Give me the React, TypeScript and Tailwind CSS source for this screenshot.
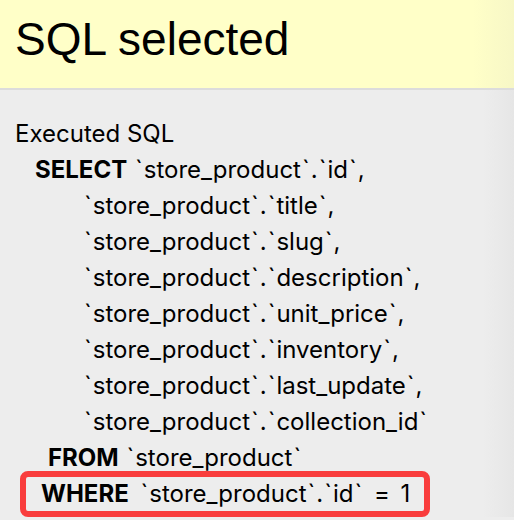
import React from 'react';

const columns = ['title', 'slug', 'description', 'unit_price', 'inventory', 'last_update'];

// backtick glyph with the wider side bearings seen in the reference font
const Tick = () => <span className="mx-[1px]">`</span>;

const Col = ({ name }: { name: string }) => (
  <>
    <Tick />store_product<Tick />.<Tick />{name}<Tick />
  </>
);

export default function App() {
  return (
    <div className="min-h-screen w-[514px] h-[520px] overflow-hidden bg-[#ededed] text-black font-['Liberation_Sans',Arial,sans-serif]">
      {/* Header */}
      <header className="h-[90px] bg-[linear-gradient(to_right,#ffffc8_92%,#f7f7c6)] border-b-2 border-[#dcdcdc] flex items-center pl-[15px] pb-[10px]">
        <h1 className="text-[46px] leading-[52px] font-normal">SQL selected</h1>
      </header>

      {/* Executed SQL */}
      <div className="pt-[26px] text-[24px] leading-[36px] font-['Inter',sans-serif] bg-[linear-gradient(to_right,#ededed_94%,#e6e6e6)]">
        <div className="pl-[15px]">Executed SQL</div>
        <div className="pl-[35px] whitespace-pre">
          <span className="font-bold">SELECT</span> <Col name="id" />,
        </div>
        {columns.map((c) => (
          <div key={c} className="pl-[83px] whitespace-pre">
            <Col name={c} />,
          </div>
        ))}
        <div className="pl-[83px] whitespace-pre">
          <Col name="collection_id" />
        </div>
        <div className="pl-[48px] whitespace-pre">
          <span className="font-bold">FROM</span> <Tick />store_product<Tick />
        </div>
        <div className="pl-[20px] -mt-[5px]">
          <div className="inline-block border-[6px] border-[#f93d3d] rounded-[8px] pl-[15px] pr-[14px] leading-[34px] whitespace-pre">
            <span className="font-bold mr-[4px]">WHERE</span> <Col name="id" /> <span className="mx-[4px]">=</span> 1
          </div>
        </div>
      </div>
    </div>
  );
}
